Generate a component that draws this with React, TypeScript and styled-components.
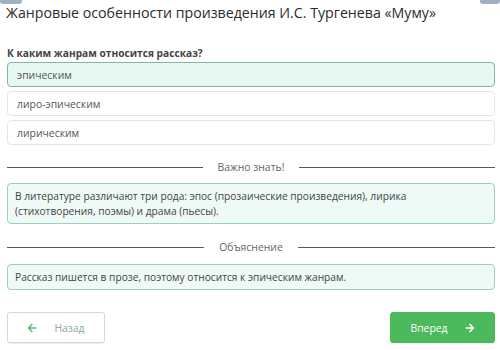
import React from 'react';
import styled, { createGlobalStyle } from 'styled-components';
import { FaArrowLeft, FaArrowRight } from 'react-icons/fa';

const GlobalStyle = createGlobalStyle`
  html, body {
    margin: 0;
    padding: 0;
    background: #ffffff;
  }
  body {
    font-family: 'Open Sans', 'Noto Sans', sans-serif;
    color: #333;
  }
`;

const Page = styled.div`
  width: 500px;
  height: 350px;
  overflow: hidden;
  padding: 0 5px 0 7px;
  box-sizing: border-box;
`;

const TopStrip = styled.div`
  height: 3px;
  display: flex;
  justify-content: space-between;
  margin: 0 -5px 0 -7px;
`;

const TopTab = styled.div<{ $w: number }>`
  width: ${({ $w }) => $w}px;
  height: 4px;
  background: #9fb1c2;
  border-radius: 0 0 3px 3px;
`;

const Title = styled.h1`
  margin: 0 0 0 -1px;
  font-size: 14.2px;
  line-height: 20px;
  font-weight: 400;
  color: #2b2b2b;
  white-space: nowrap;
`;

const Question = styled.div`
  margin-top: 22px;
  font-size: 10.2px;
  line-height: 16px;
  font-weight: 700;
  color: #444;
`;

const Options = styled.div`
  margin-top: 1px;
  display: flex;
  flex-direction: column;
  gap: 4px;
`;

const Option = styled.div<{ $selected?: boolean }>`
  height: 25px;
  box-sizing: border-box;
  display: flex;
  align-items: center;
  padding-left: 9px;
  font-size: 10.4px;
  color: #555;
  border-radius: 4px;
  border: 1px solid ${({ $selected }) => ($selected ? '#80b5ab' : '#e6e6e6')};
  background: ${({ $selected }) => ($selected ? '#e7f8f3' : '#ffffff')};
`;

const Divider = styled.div<{ $top: number }>`
  margin-top: ${({ $top }) => $top}px;
  height: 16px;
  display: flex;
  align-items: center;
  gap: 15px;
  font-size: 10.4px;
  color: #666;
  &::before,
  &::after {
    content: '';
    flex: 1;
    height: 1px;
    background: #5a5a5a;
  }
`;

const InfoBox = styled.div<{ $top: number }>`
  margin-top: ${({ $top }) => $top}px;
  box-sizing: border-box;
  padding: 5px 7px 4px;
  font-size: 10.2px;
  line-height: 15px;
  color: #444;
  background: #eefaf6;
  border: 1px solid #9ccfc2;
  border-radius: 4px;
`;

const Footer = styled.div`
  margin-top: 22px;
  display: flex;
  justify-content: space-between;
`;

const NavButton = styled.button<{ $primary?: boolean; $w: number }>`
  width: ${({ $w }) => $w}px;
  height: 31px;
  box-sizing: border-box;
  display: flex;
  align-items: center;
  justify-content: center;
  gap: 17px;
  font-family: 'Open Sans', 'Noto Sans', sans-serif;
  font-size: 10.4px;
  border-radius: 3px;
  cursor: pointer;
  border: 1px solid ${({ $primary }) => ($primary ? '#4cb95d' : '#d3d9d5')};
  background: ${({ $primary }) => ($primary ? '#4cb95d' : '#ffffff')};
  color: ${({ $primary }) => ($primary ? '#ffffff' : '#8aa7a0')};
  box-shadow: 0 1px 1px rgba(0, 0, 0, 0.08);
  svg {
    width: 10px;
    height: 10px;
    color: ${({ $primary }) => ($primary ? '#ffffff' : '#5bbb74')};
  }
`;

export default function App() {
  return (
    <>
      <GlobalStyle />
      <Page>
        <TopStrip>
          <TopTab $w={22} />
          <TopTab $w={20} />
        </TopStrip>
        <Title>Жанровые особенности произведения И.С. Тургенева «Муму»</Title>
        <Question>К каким жанрам относится рассказ?</Question>
        <Options>
          <Option $selected>эпическим</Option>
          <Option>лиро-эпическим</Option>
          <Option>лирическим</Option>
        </Options>
        <Divider $top={14}>Важно знать!</Divider>
        <InfoBox $top={8}>
          В литературе различают три рода: эпос (прозаические произведения), лирика
          <br />
          (стихотворения, поэмы) и драма (пьесы).
        </InfoBox>
        <Divider $top={15}>Объяснение</Divider>
        <InfoBox $top={9}>Рассказ пишется в прозе, поэтому относится к эпическим жанрам.</InfoBox>
        <Footer>
          <NavButton $w={98}>
            <FaArrowLeft />
            Назад
          </NavButton>
          <NavButton $primary $w={105}>
            Вперед
            <FaArrowRight />
          </NavButton>
        </Footer>
      </Page>
    </>
  );
}
